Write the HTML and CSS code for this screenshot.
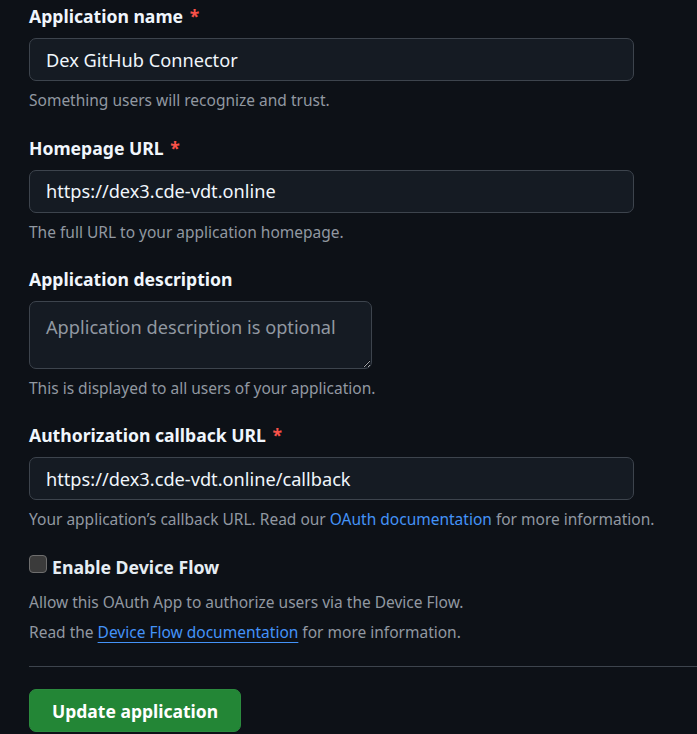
FILE: index.html
```html
<!DOCTYPE html>
<html lang="en">
<head>
<meta charset="utf-8">
<title>Edit OAuth App</title>
<link rel="stylesheet" href="styles.css">
</head>
<body>
<form class="form">
  <div class="field">
    <label class="label">Application name <span class="req">*</span></label>
    <input class="input" type="text" value="Dex GitHub Connector">
    <p class="note">Something users will recognize and trust.</p>
  </div>
  <div class="field">
    <label class="label">Homepage URL <span class="req">*</span></label>
    <input class="input" type="text" value="https://dex3.cde-vdt.online">
    <p class="note">The full URL to your application homepage.</p>
  </div>
  <div class="field">
    <label class="label">Application description</label>
    <textarea class="textarea" placeholder="Application description is optional"></textarea>
    <p class="note">This is displayed to all users of your application.</p>
  </div>
  <div class="field">
    <label class="label">Authorization callback URL <span class="req">*</span></label>
    <input class="input" type="text" value="https://dex3.cde-vdt.online/callback">
    <p class="note">Your application’s callback URL. Read our <a class="link" href="#">OAuth documentation</a> for more information.</p>
  </div>
  <div class="field check-field">
    <label class="check-label"><input class="checkbox" type="checkbox"><span>Enable Device Flow</span></label>
    <p class="note note-first">Allow this OAuth App to authorize users via the Device Flow.</p>
    <p class="note note-second">Read the <a class="link link-underline" href="#">Device Flow documentation</a> for more information.</p>
  </div>
  <hr class="divider">
  <button class="btn" type="button">Update application</button>
</form>
</body>
</html>
```
FILE: styles.css
```css
* { box-sizing: border-box; }
html, body {
  margin: 0;
  padding: 0;
  background: #0d1117;
  color: #e6edf3;
  font-family: "Noto Sans", "Open Sans", sans-serif;
  overflow: hidden;
}
.form {
  padding: 3px 0 0 29px;
  display: flex;
  flex-direction: column;
  align-items: flex-start;
}
.field {
  display: flex;
  flex-direction: column;
  align-items: flex-start;
  margin-bottom: 23px;
  width: 100%;
}
.label {
  font-size: 17.6px;
  font-weight: 700;
  line-height: 26px;
  margin-bottom: 9px;
  color: #f0f6fc;
}
.req { color: #f85149; margin-left: 2px; }
.input, .textarea {
  font-family: inherit;
  font-size: 18.2px;
  color: #f0f6fc;
  background: #151b23;
  border: 1px solid #3d444d;
  border-radius: 7px;
  padding: 0 16px;
  outline: none;
  color-scheme: dark;
}
.input {
  width: 605px;
  height: 43px;
}
.textarea {
  width: 343px;
  height: 67.5px;
  padding-top: 12px;
  line-height: 26px;
  resize: vertical;
}
.textarea::placeholder { color: #9198a1; opacity: 1; }
.note {
  margin: 8px 0 0 0;
  font-size: 15.5px;
  line-height: 22.5px;
  color: #9198a1;
}
.link { color: #4493f8; text-decoration: none; }
.link-underline { text-decoration: underline; text-underline-offset: 4px; }
.check-label {
  display: flex;
  align-items: center;
  gap: 5px;
  font-size: 17.7px;
  font-weight: 700;
  line-height: 26px;
}
.checkbox {
  appearance: none;
  margin: -6px 0 0 0;
  width: 18px;
  height: 18px;
  border-radius: 4px;
  background: #3b3b3b;
  border: 1px solid #6e6e6e;
}
.note-first { margin-top: 11px; }
.note-second { margin-top: 7.5px; }
.check-field { margin-bottom: 0; }
.divider {
  align-self: stretch;
  margin: 22.5px 0 22.5px 0;
  border: 0;
  border-top: 1px solid #3d444d;
  height: 0;
  width: calc(100% + 29px);
}
.btn {
  font-family: inherit;
  font-size: 17.5px;
  font-weight: 700;
  color: #ffffff;
  background: #238636;
  border: 1px solid #2b8a3e;
  border-radius: 7px;
  height: 43px;
  padding: 0 22px;
}
```
